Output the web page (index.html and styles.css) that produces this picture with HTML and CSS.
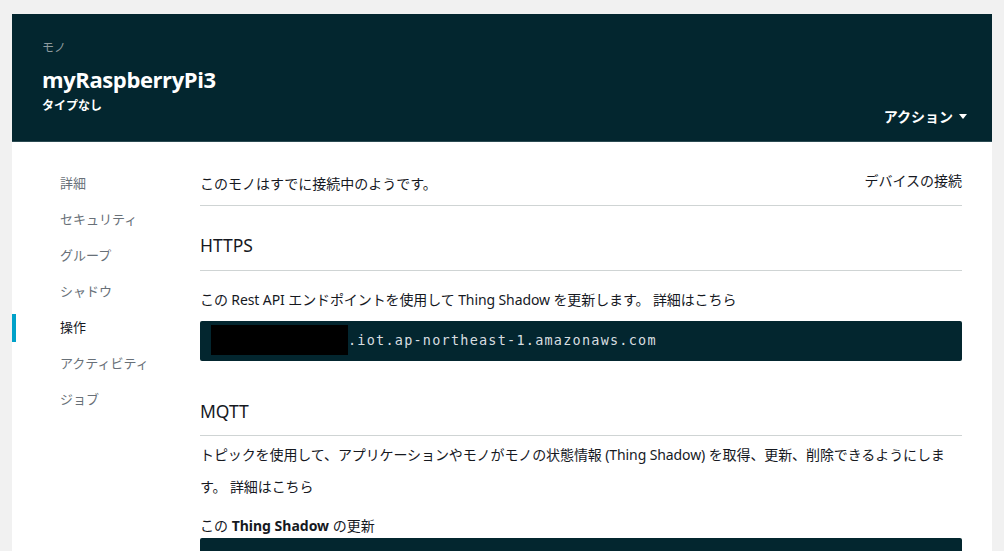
FILE: index.html
```html
<!DOCTYPE html>
<html lang="ja">
<head>
<meta charset="utf-8">
<title>myRaspberryPi3</title>
<link rel="stylesheet" href="styles.css">
</head>
<body>
<div class="card">
  <header class="thing-header">
    <div class="thing-titles">
      <div class="thing-kind">モノ</div>
      <h1 class="thing-name">myRaspberryPi3</h1>
      <div class="thing-type">タイプなし</div>
    </div>
    <button class="actions">アクション <span class="caret"></span></button>
  </header>
  <div class="thing-body">
    <nav class="sidenav">
      <a class="nav-item">詳細</a>
      <a class="nav-item">セキュリティ</a>
      <a class="nav-item">グループ</a>
      <a class="nav-item">シャドウ</a>
      <a class="nav-item active">操作</a>
      <a class="nav-item">アクティビティ</a>
      <a class="nav-item">ジョブ</a>
    </nav>
    <main class="main">
      <div class="status-row">
        <span>このモノはすでに接続中のようです。</span>
        <a class="connect-link">デバイスの接続</a>
      </div>
      <h2 class="section-title https-title">HTTPS</h2>
      <p class="para">この Rest API エンドポイントを使用して Thing Shadow を更新します。 <a class="more">詳細はこちら</a></p>
      <div class="code"><span class="redact"></span>.iot.ap-northeast-1.amazonaws.com</div>
      <h2 class="section-title mqtt-title">MQTT</h2>
      <p class="para para-mqtt">トピックを使用して、アプリケーションやモノがモノの状態情報 (Thing Shadow) を取得、更新、削除できるようにします。 <a class="more">詳細はこちら</a></p>
      <div class="sub-label">この <b>Thing Shadow</b> の更新</div>
      <div class="code code-tall"></div>
    </main>
  </div>
</div>
</body>
</html>
```
FILE: styles.css
```css
* { box-sizing: border-box; }
html, body { margin: 0; padding: 0; }
body {
  background: #f1f1f1;
  font-family: "Noto Sans", "Noto Sans CJK JP", sans-serif;
  color: #16191f;
  font-size: 14px;
  height: 551px;
  overflow: hidden;
}
.card {
  margin: 14px 12px 0 12px;
  background: #fff;
  min-height: 600px;
}
.thing-header {
  background: #03262f;
  border-bottom: 1px solid #2b4a52;
  height: 128px;
  padding: 0 30px;
  display: flex;
  justify-content: space-between;
  align-items: flex-end;
}
.thing-titles {
  align-self: flex-start;
  padding-top: 25px;
}
.thing-kind {
  font-family: "Noto Sans CJK JP", sans-serif;
  font-size: 12px;
  line-height: 16px;
  color: #8d9a9d;
}
.thing-name {
  margin: 9px 0 0 0;
  font-family: "Open Sans", "Noto Sans", sans-serif;
  font-size: 22px;
  font-weight: 700;
  line-height: 30px;
  color: #fff;
  letter-spacing: -0.4px;
}
.thing-type {
  margin-top: 3px;
  font-family: "Noto Sans CJK JP", sans-serif;
  font-size: 12px;
  font-weight: 700;
  line-height: 16px;
  color: #fff;
}
.actions {
  background: none;
  border: 0;
  padding: 0;
  margin-bottom: 16px;
  color: #fff;
  font-family: "Noto Sans CJK JP", sans-serif;
  font-size: 14px;
  font-weight: 700;
  line-height: 18px;
  display: flex;
  align-items: center;
  gap: 6px;
  margin-right: -5px;
}
.caret {
  width: 0;
  height: 0;
  border-left: 4px solid transparent;
  border-right: 4px solid transparent;
  border-top: 5px solid #fff;
}
.thing-body {
  display: flex;
}
.sidenav {
  width: 188px;
  flex: none;
  padding-top: 28px;
  display: flex;
  flex-direction: column;
  gap: 8px;
}
.nav-item {
  display: block;
  height: 28px;
  line-height: 25px;
  padding-left: 48px;
  font-family: "Noto Sans CJK JP", sans-serif;
  font-size: 13px;
  color: #687078;
}
.nav-item.active {
  border-left: 4px solid #00a1c9;
  padding-left: 44px;
  color: #16191f;
}
.main {
  width: 762px;
  flex: none;
}
.status-row {
  display: flex;
  justify-content: space-between;
  align-items: center;
  padding-top: 31px;
  padding-bottom: 12px;
  line-height: 20px;
  border-bottom: 1px solid #cfd4d4;
  font-family: "Noto Sans CJK JP", sans-serif;
  font-size: 14px;
}
.connect-link {
  margin-top: -6px;
  color: #16191f;
}
.section-title {
  margin: 0;
  font-family: "Noto Sans", "Noto Sans CJK JP", sans-serif;
  font-size: 17.5px;
  font-weight: 400;
  line-height: 24px;
  padding-bottom: 13px;
  border-bottom: 1px solid #cfd4d4;
}
.https-title { margin-top: 27px; }
.mqtt-title { margin-top: 38px; padding-bottom: 12px; }
.para {
  margin: 19px 0 0 0;
  font-family: "Noto Sans", "Noto Sans CJK JP", sans-serif;
  font-size: 14px;
  line-height: 20px;
  letter-spacing: -0.1px;
}
.para-mqtt {
  margin-top: 3px;
  line-height: 32px;
}
.more { color: #16191f; }
.code {
  margin-top: 11px;
  height: 40px;
  background: #03262f;
  border-radius: 2px;
  padding: 4px 0 0 11px;
  display: flex;
  font-family: "DejaVu Sans Mono", "Liberation Mono", monospace;
  font-size: 13.5px;
  letter-spacing: 1.23px;
  color: #d8dee0;
  align-items: flex-start;
  line-height: 30px;
}
.redact {
  display: inline-block;
  width: 137px;
  height: 30px;
  background: #000;
  flex: none;
}
.sub-label {
  margin-top: 13px;
  line-height: 20px;
  font-family: "Noto Sans", "Noto Sans CJK JP", sans-serif;
  font-size: 14px;
}
.sub-label b { font-weight: 700; }
.code-tall {
  margin-top: 2px;
  height: 80px;
}
```
